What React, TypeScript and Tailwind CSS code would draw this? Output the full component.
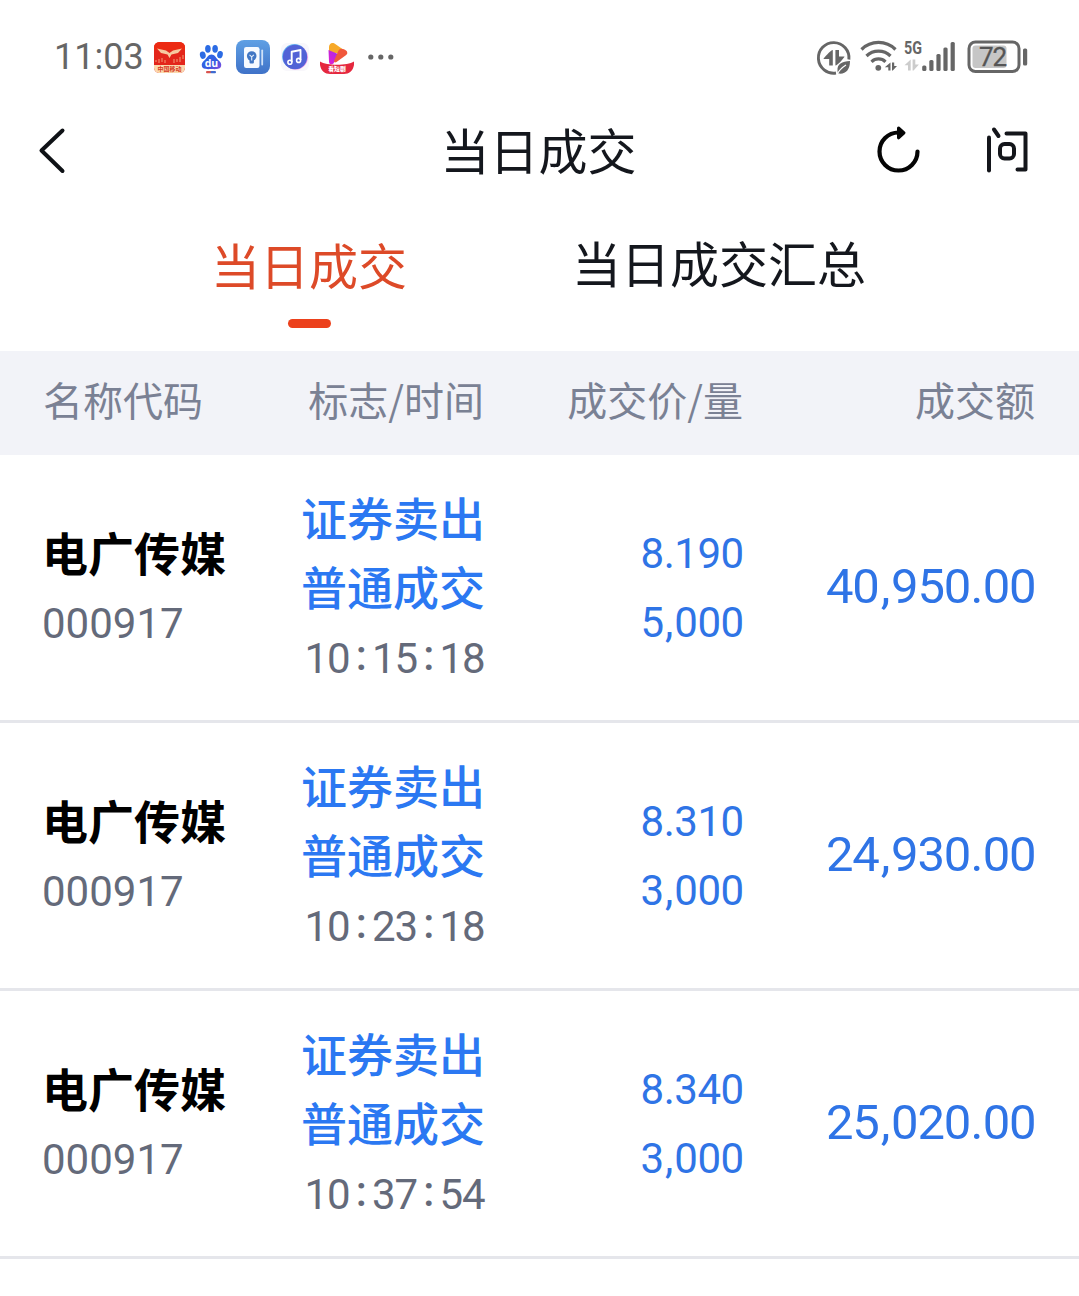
const trades = [
  { name: '电广传媒', code: '000917', side: '证券卖出', kind: '普通成交', time: '10:15:18', price: '8.190', qty: '5,000', amount: '40,950.00' },
  { name: '电广传媒', code: '000917', side: '证券卖出', kind: '普通成交', time: '10:23:18', price: '8.310', qty: '3,000', amount: '24,930.00' },
  { name: '电广传媒', code: '000917', side: '证券卖出', kind: '普通成交', time: '10:37:54', price: '8.340', qty: '3,000', amount: '25,020.00' },
];

const AppIcons = () => (
  <div className="flex items-center">
    {/* Red news app */}
    <svg className="ml-[12px] w-[31px] h-[31px]" viewBox="0 0 31 31">
      <defs>
        <clipPath id="redClip"><rect width="31" height="31" rx="5.5" /></clipPath>
      </defs>
      <g clipPath="url(#redClip)">
        <rect width="31" height="31" fill="#e3261b" />
        <rect width="31" height="8" fill="#ec2a12" />
        <rect y="23" width="31" height="8" fill="#fbd9ae" />
        <path d="M3 6.5 L12 8.5 L15.5 11 L19 8.5 L28 6.5 L24 11 L17.5 12.5 L15.5 16 L13.5 12.5 L7 11 Z" fill="#f6c9a0" />
        <path d="M2 20v-2M5 21v-4M8 20v-4M11 21v-3M20 21v-4M23 20v-3M26 20v-5M29 17v-4" stroke="#f08a6a" strokeWidth="1.2" />
      </g>
      <text x="15.5" y="29.2" textAnchor="middle" fontSize="6" fontWeight="700" fill="#d63a24" fontFamily="'Noto Sans CJK SC', sans-serif">中国移动</text>
    </svg>

    {/* Baidu paw */}
    <svg className="ml-[14px] w-[25px] h-[31px] relative top-[2px]" viewBox="0 0 25 31">
      <defs>
        <linearGradient id="paw" x1="0" y1="0" x2="1" y2="1">
          <stop offset="0" stopColor="#2b6fe6" />
          <stop offset=".6" stopColor="#3559e0" />
          <stop offset="1" stopColor="#8a4be0" />
        </linearGradient>
      </defs>
      <g fill="#2b6be4">
        <ellipse cx="3.8" cy="11.2" rx="2.9" ry="3.7" transform="rotate(-12 3.8 11.2)" />
        <ellipse cx="8.9" cy="4.8" rx="2.8" ry="3.9" />
        <ellipse cx="16.1" cy="4.8" rx="2.8" ry="3.9" />
        <ellipse cx="21" cy="10.6" rx="2.8" ry="3.7" transform="rotate(12 21 10.6)" />
      </g>
      <path d="M12.5 10.5c3.2 0 4.2 3 6.4 5.2c2.5 2.3 3.9 3.7 3.2 6.6c-.9 3.3-4.6 2.8-9.6 2.8s-8.7.5-9.6-2.8c-.7-2.9.7-4.3 3.2-6.6c2.2-2.2 3.2-5.2 6.4-5.2z" fill="url(#paw)" />
      <text x="12.4" y="22.8" textAnchor="middle" fontSize="10.5" fontWeight="700" fill="#fff" fontFamily="'Open Sans', sans-serif">du</text>
      <rect x="7" y="27" width="5.5" height="2.2" rx="1" fill="#d9544f" />
      <rect x="11.5" y="27" width="5.5" height="2.2" rx="1" fill="#3f6bd0" />
    </svg>

    {/* Notebook with bulb */}
    <svg className="ml-[12px] w-[34px] h-[34px]" viewBox="0 0 34 34">
      <defs>
        <linearGradient id="note" x1="0" y1="0" x2="0" y2="1">
          <stop offset="0" stopColor="#5fa0e4" />
          <stop offset="1" stopColor="#3f72c8" />
        </linearGradient>
      </defs>
      <rect width="34" height="34" rx="8" fill="url(#note)" />
      <rect x="8" y="7" width="15.5" height="21" rx="2.2" fill="#f6faff" />
      <rect x="25.3" y="9.5" width="1.8" height="16" rx=".9" fill="#cfe2f8" />
      <circle cx="15.7" cy="16" r="4.8" fill="#4177c4" />
      <rect x="13.5" y="19" width="4.4" height="4.6" rx="1" fill="#4177c4" />
      <path d="M13.5 14.8l2.2 2 2.2-2M15.7 17v3.5" stroke="#e6f0fc" strokeWidth="1.1" fill="none" />
    </svg>

    {/* Music */}
    <svg className="ml-[11px] w-[28px] h-[28px]" viewBox="0 0 28 28">
      <rect width="28" height="28" rx="6" fill="#f8f7fb" />
      <circle cx="14.5" cy="14.2" r="12.4" fill="#ef9bea" />
      <circle cx="13.5" cy="13.5" r="12.4" fill="#69b8f2" />
      <circle cx="14" cy="14" r="12.2" fill="#5262d6" />
      <path d="M10.7 19V8.8l8.8-1.8v10" fill="none" stroke="#fff" strokeWidth="1.9" strokeLinejoin="round" />
      <circle cx="8.9" cy="19.2" r="2" fill="none" stroke="#fff" strokeWidth="1.6" />
      <circle cx="17.6" cy="17.4" r="2" fill="none" stroke="#fff" strokeWidth="1.6" />
    </svg>

    {/* Video */}
    <svg className="ml-[11px] w-[34px] h-[34px] relative top-[1px]" viewBox="0 0 34 34">
      <defs>
        <linearGradient id="play" x1="0" y1="1" x2="1" y2="0">
          <stop offset="0" stopColor="#e51ed0" />
          <stop offset="1" stopColor="#a22be8" />
        </linearGradient>
      </defs>
      <path d="M9 6c0-3 2.5-5 5.5-3.5l11.5 8c2 1.5 1.5 3-.5 2.5L9 11.5z" fill="#f7a928" />
      <path d="M8.5 9l9.5 4-4.5 9.5c-2 1.5-4.5 1-4.5-2z" fill="url(#play)" />
      <path d="M26 9.5c2 1.5 1.5 4-.5 5L16.5 21c-2 1-3 0-2.2-2l4-9c1.5-3.5 5.2-2.5 7.7-.5z" fill="#f0583c" />
      <path d="M0 20.5c3.5 2.2 10 3.2 17 3.2s13.5-1 17-3.2v3.5c-1 6-5 9-10 9H10c-5 0-9-3-10-9z" fill="#e5283f" />
      <text x="17" y="30.4" textAnchor="middle" fontSize="5.8" fontWeight="900" fill="#fff" fontFamily="'Noto Sans CJK SC', sans-serif">看短剧</text>
    </svg>

    <svg className="ml-[14px] w-[26px] h-[6px]" viewBox="0 0 26 6" fill="#666">
      <circle cx="2.8" cy="3" r="2.6" />
      <circle cx="12.8" cy="3" r="2.6" />
      <circle cx="22.8" cy="3" r="2.6" />
    </svg>
  </div>
);

const SystemIcons = () => (
  <div className="flex items-center">
    {/* Data saver */}
    <svg className="w-[36px] h-[36px] relative top-[1px]" viewBox="0 0 36 36">
      <path d="M20 33A15.3 15.3 0 1 1 32.9 19.5" fill="none" stroke="#666" strokeWidth="2.9" />
      <path d="M16.8 10v15.5h-3.6V19H7.5c0-1 7.5-9 9.3-9zM19.4 10h3.6v6.5h5.5c0 1-7 9-9.1 9z" fill="#666" />
      <path d="M34 21c-8 .3-13 3-12.5 9.5 0 1.5 .5 2.5 1 3 7 1 11.5-3.5 11.5-12.5z" fill="#666" />
      <path d="M21 34.5c2-4 5-7 9-9.5" fill="none" stroke="#fff" strokeWidth="1.2" />
    </svg>

    {/* Wifi */}
    <svg className="ml-[8px] w-[38px] h-[36px]" viewBox="0 0 38 36" fill="none">
      <path d="M1.5 10.5a24 24 0 0 1 34 0" stroke="#666" strokeWidth="3.2" />
      <path d="M6.5 17a17 17 0 0 1 24 0" stroke="#666" strokeWidth="3.2" />
      <path d="M11.5 22.8a10 10 0 0 1 14 0" stroke="#666" strokeWidth="3.2" />
      <circle cx="18.3" cy="28.8" r="2.9" fill="#666" />
      <path d="M30.5 23.5v8h-2.2V28.3h-3.5zM32 23.5h2.2v3.5h2.8l-4.2 4.5H32z" fill="#666" />
    </svg>

    {/* 5G signal */}
    <svg className="ml-[5px] w-[54px] h-[36px]" viewBox="0 0 54 36" fill="#666">
      <text x="1" y="15" fontSize="18.5" fontWeight="700" textLength="18" lengthAdjust="spacingAndGlyphs" fontFamily="Roboto, sans-serif">5G</text>
      <path d="M7.7 20.5v11H5v-5.2H1.5zM9.6 20.5h2.7v5h3.6l-5.3 6h-1z" fill="#ccc" />
      <rect x="19.2" y="26.5" width="4.2" height="5.5" rx="1.5" />
      <rect x="26.3" y="21" width="4.2" height="11" rx="1.5" />
      <rect x="33.4" y="15" width="4.2" height="17" rx="1.5" />
      <rect x="40.4" y="8.5" width="4.2" height="23.5" rx="1.5" />
      <rect x="47.6" y="3" width="4.2" height="29" rx="1.5" />
    </svg>

    {/* Battery */}
    <svg className="ml-[10px] w-[62px] h-[34px]" viewBox="0 0 62 34">
      <rect x="5.5" y="5.5" width="34" height="22.5" rx="3" fill="#c6c6c6" />
      <rect x="2" y="2" width="50" height="29.5" rx="6.5" fill="none" stroke="#666" strokeWidth="3" />
      <rect x="56" y="8.5" width="4.2" height="17" rx="1.5" fill="#666" />
      <text x="26" y="26" textAnchor="middle" fontSize="26" textLength="28" fill="#555" stroke="#555" strokeWidth=".3" fontFamily="Roboto, sans-serif">72</text>
    </svg>
  </div>
);

const StatusBar = () => (
  <div className="h-[114px] pl-[54px] pr-[50px] flex items-center justify-between text-[#666]">
    <div className="flex items-center">
      <span className="w-[88px] font-[Roboto,sans-serif] text-[36px] leading-none">11:03</span>
      <AppIcons />
    </div>
    <SystemIcons />
  </div>
);

const NavBar = () => (
  <div className="h-[72px] grid grid-cols-[262px_1fr_252px] items-center pl-[36px] pr-[48px]">
    <svg className="w-[32px] h-[48px]" viewBox="0 0 32 48" fill="none">
      <path d="M26.5 4.5L5.5 24.5l21 20.500" stroke="#0f1216" strokeWidth="4" strokeLinecap="round" strokeLinejoin="round" />
    </svg>
    <h1 className="text-center text-[49px] leading-[48px] text-[#14171d] pb-[2px]">当日成交</h1>
    <div className="flex items-center justify-end gap-[63px] pb-[2px]">
      <svg className="w-[46px] h-[50px]" viewBox="0 0 46 50" fill="none">
        <path d="M22.5 8.5A19 19 0 1 0 41.5 27.5" stroke="#050505" strokeWidth="4.2" strokeLinecap="round" />
        <path d="M22.5 4l5.500 4.800-5.500 5z" fill="#050505" stroke="#050505" strokeWidth="3" strokeLinejoin="round" />
      </svg>
      <svg className="mr-[2px] w-[44px] h-[50px]" viewBox="0 0 44 50" fill="none" stroke="#14161b" strokeWidth="4" strokeLinecap="round" strokeLinejoin="round">
        <path d="M4 13.5v33" />
        <path d="M9 5.5l4.500 6.500" />
        <path d="M21.5 9.5H40.5V45.5H32.5" />
        <rect x="15" y="20" width="14" height="14.5" rx="4.5" />
      </svg>
    </div>
  </div>
);

const Tabs = () => (
  <div className="h-[165px] flex items-start pl-[211px] text-[49px] leading-[48px]">
    <div className="flex flex-col items-center w-[196px] pt-[54px]">
      <span className="text-[#dd4a28]">当日成交</span>
      <span className="mt-[31px] ml-px w-[43px] h-[9px] rounded-full bg-[#ec411c]" />
    </div>
    <span className="ml-[165px] pt-[52px] text-[#14171d]">当日成交汇总</span>
  </div>
);

const TableHead = () => (
  <div className="h-[104px] grid grid-cols-[302px_182px_259px_292px] items-center bg-[#f2f3f8] text-[40px] leading-[40px] pb-[8px] text-[#7a8194] text-right">
    <span className="pl-[43px] text-left">名称代码</span>
    <span>标志/时间</span>
    <span>成交价/量</span>
    <span>成交额</span>
  </div>
);

// Every character sits in a cell of its own so the figures line up between rows
const Figures = ({ value, digit, mark }: { value: string; digit: string; mark: string }) => (
  <span className="flex justify-end">
    {value.split('').map((c, i) => (
      <span key={i} className={`flex justify-center ${/\d/.test(c) ? digit : mark}`}>{c}</span>
    ))}
  </span>
);

const TradeRow = ({ trade }: { trade: (typeof trades)[number] }) => (
  <div className="h-[268px] grid grid-cols-[302px_183px_259px_292px] items-center border-b-3 border-[#e5e6eb] text-[#2f74e6]">
    <div className="pl-[42px] pt-px flex flex-col">
      <span className="pb-[4px] text-[46px] leading-[66px] font-bold text-black">{trade.name}</span>
      <span className="pt-px font-[Roboto,sans-serif] text-[42px] leading-[70px] text-[#646a7a]">{trade.code}</span>
    </div>
    <div className="pt-px flex flex-col items-end whitespace-nowrap">
      <span className="text-[46px] leading-[69px] font-medium text-[#2b78f2]">{trade.side}</span>
      <span className="text-[46px] leading-[69px] font-medium text-[#2b78f2]">{trade.kind}</span>
      <div className="pt-[4px] font-[Roboto,sans-serif] text-[42px] leading-[70px] text-[#646a7a]">
        <Figures value={trade.time} digit="w-[22.5px]" mark="w-[22.5px] font-medium -mt-[3px]" />
      </div>
    </div>
    <div className="pt-px font-[Roboto,sans-serif] text-[42px] leading-[69px]">
      <Figures value={trade.price} digit="w-[23.2px]" mark="w-[10.5px]" />
      <Figures value={trade.qty} digit="w-[23.2px]" mark="w-[10.5px]" />
    </div>
    <div className="pb-[2px] font-[Roboto,sans-serif] text-[49px] leading-[69px]">
      <Figures value={trade.amount} digit="w-[26.4px]" mark="w-[12.4px]" />
    </div>
  </div>
);

const App = () => {
  return (
    <div className="w-[1079px] h-[1296px] overflow-hidden bg-white font-['Noto_Sans_CJK_SC',sans-serif]">
      <StatusBar />
      <NavBar />
      <Tabs />
      <TableHead />
      {trades.map((t) => (
        <TradeRow key={t.time} trade={t} />
      ))}
    </div>
  );
};

export default App;
